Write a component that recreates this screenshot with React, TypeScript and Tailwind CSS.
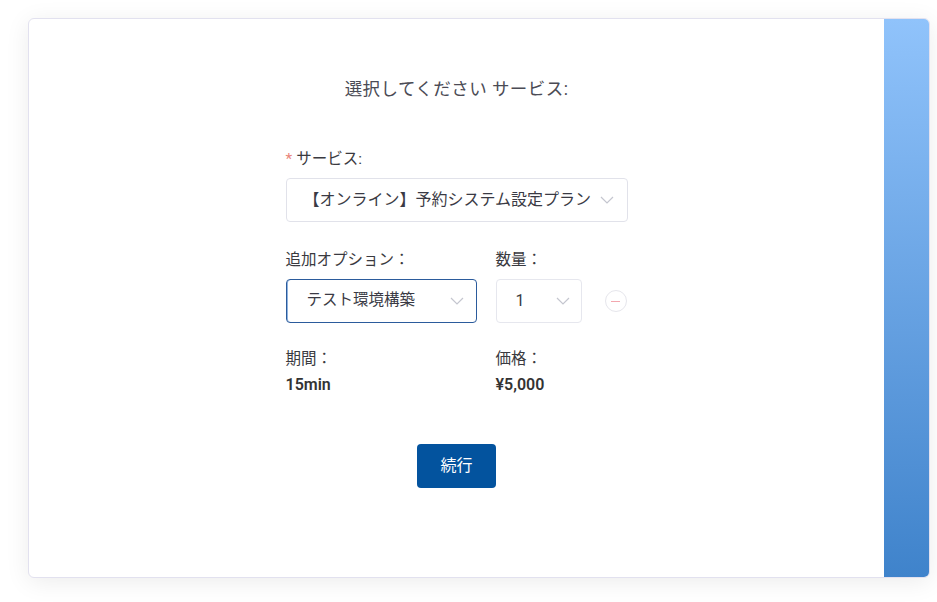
import React from 'react';

const FONT = { fontFamily: 'Roboto, "Noto Sans CJK JP", sans-serif' };

const Chevron = () => (
    <svg width="14" height="8" viewBox="0 0 14 8" fill="none" className="shrink-0">
        <path d="M1 1l6 6 6-6" stroke="#c4c6cf" strokeWidth="1.2" />
    </svg>
);

export default function App() {
    return (
        <div className="w-[937px] h-[602px] bg-white pt-[18px] pl-[28px]" style={FONT}>
            <div className="w-[902px] h-[560px] flex rounded-md border border-[#e2e1ef] overflow-hidden shadow-[0_4px_24px_rgba(0,0,0,0.08)] bg-white">
                {/* Main */}
                <div className="flex-1 flex flex-col items-center pt-[58px]">
                    <h2 className="text-[17.5px] leading-6 text-[#4b4b55] tracking-wide">選択してください サービス:</h2>

                    <div className="w-[342px] mt-[48px]">
                        <div className="text-[15.5px] leading-5 text-[#3a3a40]">
                            <span className="text-[#e9857a] mr-1">*</span>サービス:
                        </div>
                        <div className="mt-[9px] h-[44px] border border-[#e1e2ea] rounded flex items-center justify-between pl-[17px] pr-[13px]">
                            <span className="text-[16px] text-[#3a3a44]">【オンライン】予約システム設定プラン</span>
                            <Chevron />
                        </div>

                        <div className="mt-[28px] flex">
                            <div className="w-[210px]">
                                <div className="text-[15.5px] leading-5 text-[#3a3a40]">追加オプション：</div>
                                <div className="mt-[9px] w-[191px] h-[44px] border border-[#2b5b9c] rounded flex items-center justify-between pl-[20px] pr-[12px] shadow-[inset_1px_0_0_#8fb3df]">
                                    <span className="text-[15.5px] text-[#3a3a44]">テスト環境構築</span>
                                    <Chevron />
                                </div>
                            </div>
                            <div>
                                <div className="text-[15.5px] leading-5 text-[#3a3a40]">数量：</div>
                                <div className="mt-[9px] flex items-center">
                                    <div className="w-[86px] h-[44px] border border-[#e6e7ee] rounded flex items-center justify-between pl-[19px] pr-[11px]">
                                        <span className="text-[16px] text-[#3a3a44]">1</span>
                                        <Chevron />
                                    </div>
                                    <button className="ml-[23px] w-[22px] h-[22px] rounded-full border border-[#e6e6ec] flex items-center justify-center">
                                        <span className="block w-[9px] h-px bg-[#f3a7ae]" />
                                    </button>
                                </div>
                            </div>
                        </div>

                        <div className="mt-[26px] flex text-[15.5px] leading-5 text-[#3a3a40]">
                            <div className="w-[210px]">
                                <div>期間：</div>
                                <div className="mt-[6px] text-[16px] font-semibold text-[#333]">15min</div>
                            </div>
                            <div>
                                <div>価格：</div>
                                <div className="mt-[6px] text-[16px] font-semibold text-[#333]">¥5,000</div>
                            </div>
                        </div>
                    </div>

                    <button className="mt-[49px] w-[79px] h-[44px] rounded bg-[#03539e] text-white text-[16px]">続行</button>
                </div>

                {/* Side strip */}
                <div className="w-[45px] bg-gradient-to-b from-[#90c3fb] to-[#3f83cb]" />
            </div>
        </div>
    );
}
